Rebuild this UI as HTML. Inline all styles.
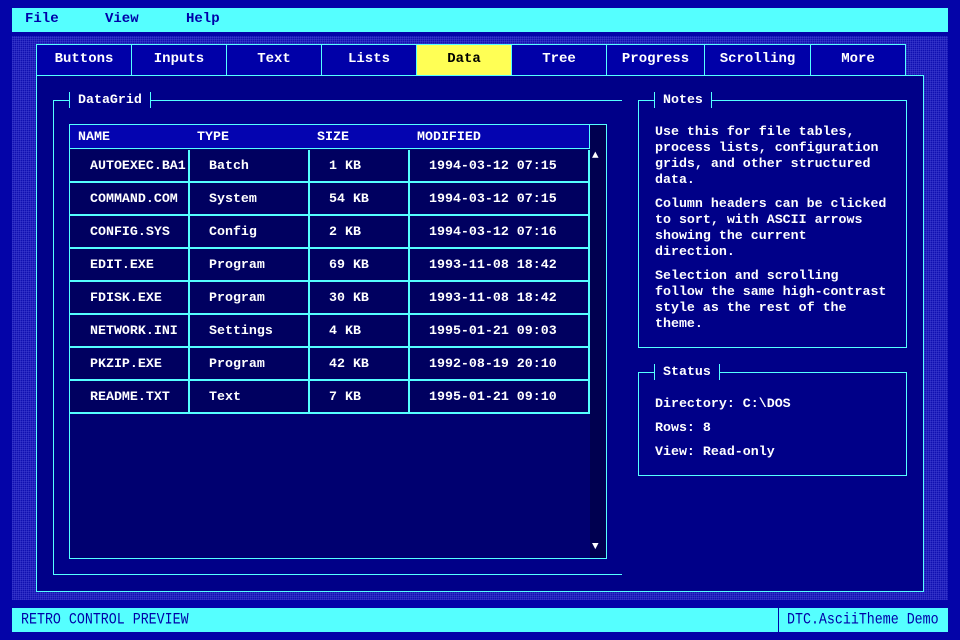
<!DOCTYPE html>
<html><head><style>
*{margin:0;padding:0;box-sizing:border-box}
body{width:960px;height:640px;background:#0404a8;font-family:"Liberation Mono",monospace;font-weight:bold;font-size:13.3px;color:#fff;position:relative;overflow:hidden}
.abs{position:absolute}
.menu{left:12px;top:8px;width:936px;height:24px;background:#55ffff;color:#0000a8;font-size:14px}
.menu span{position:absolute;top:3px}
.dither{left:12px;top:36px;width:936px;height:564px;background-color:#1010b0;background-image:repeating-linear-gradient(0deg,rgba(80,80,220,.35) 0 1px,transparent 1px 2px),repeating-linear-gradient(90deg,rgba(80,80,220,.35) 0 1px,transparent 1px 2px)}
.main{left:36px;top:75px;width:888px;height:517px;background:#000088;border:1px solid #55ffff}
.tab{top:44px;height:32px;background:#0000a8;border:1px solid #55ffff;text-align:center;line-height:28px;font-size:14px}
.tab.act{background:#ffff55;color:#000}
.ln{background:#55ffff}
.grid{left:69px;top:124px;width:538px;height:435px;background:#000070;border:1px solid #55ffff}
.hdr{left:70px;top:125px;width:520px;height:24px;background:#0404b0;border-bottom:1px solid #55ffff;border-right:1px solid #55ffff}
.row{left:70px;width:520px;height:33px;border-bottom:2px solid #55ffff;background:#000060}
.row span{position:absolute;top:8px}
.vc{position:absolute;top:0;bottom:0;width:2px;background:#55ffff}
.box{border:1px solid #55ffff}
.lbl{background:#000088;padding:0 8px;border-left:1px solid #55ffff;border-right:1px solid #55ffff;line-height:16px}
p{line-height:16px;margin-bottom:8px;width:236px}
.status{left:12px;top:608px;width:936px;height:24px;background:#55ffff;color:#0000a8;font-weight:normal;font-size:13.3px}
.status span{transform:scaleY(1.2);transform-origin:0 50%}
</style></head><body>
<div class="abs menu"><span style="left:13px">File</span><span style="left:93px">View</span><span style="left:174px">Help</span></div>
<div class="abs dither"></div>
<div class="abs main"></div>
<div class="abs tab" style="left:36px;width:96px">Buttons</div>
<div class="abs tab" style="left:131px;width:96px">Inputs</div>
<div class="abs tab" style="left:226px;width:96px">Text</div>
<div class="abs tab" style="left:321px;width:96px">Lists</div>
<div class="abs tab act" style="left:416px;width:96px">Data</div>
<div class="abs tab" style="left:511px;width:96px">Tree</div>
<div class="abs tab" style="left:606px;width:99px">Progress</div>
<div class="abs tab" style="left:704px;width:107px">Scrolling</div>
<div class="abs tab" style="left:810px;width:96px">More</div>

<div class="abs ln" style="left:53px;top:100px;width:569px;height:1px"></div>
<div class="abs ln" style="left:53px;top:100px;width:1px;height:475px"></div>
<div class="abs ln" style="left:53px;top:574px;width:569px;height:1px"></div>
<div class="abs lbl" style="left:69px;top:92px">DataGrid</div>

<div class="abs grid"></div>
<div class="abs" style="left:590px;top:125px;width:16px;height:433px;background:#000050"></div>
<div class="abs" style="left:592px;top:150px;font-size:11px">▲</div>
<div class="abs" style="left:592px;top:541px;font-size:11px">▼</div>
<div class="abs hdr"><span class="abs" style="left:8px;top:4px">NAME</span><span class="abs" style="left:127px;top:4px">TYPE</span><span class="abs" style="left:247px;top:4px">SIZE</span><span class="abs" style="left:347px;top:4px">MODIFIED</span></div>

<div class="abs row" style="top:150px"><span style="left:20px">AUTOEXEC.BA1</span><i class="vc" style="left:118px"></i><span style="left:139px">Batch</span><i class="vc" style="left:238px"></i><span style="left:259px">1 KB</span><i class="vc" style="left:338px"></i><span style="left:359px">1994-03-12 07:15</span><i class="vc" style="left:518px"></i></div>
<div class="abs row" style="top:183px"><span style="left:20px">COMMAND.COM</span><i class="vc" style="left:118px"></i><span style="left:139px">System</span><i class="vc" style="left:238px"></i><span style="left:259px">54 KB</span><i class="vc" style="left:338px"></i><span style="left:359px">1994-03-12 07:15</span><i class="vc" style="left:518px"></i></div>
<div class="abs row" style="top:216px"><span style="left:20px">CONFIG.SYS</span><i class="vc" style="left:118px"></i><span style="left:139px">Config</span><i class="vc" style="left:238px"></i><span style="left:259px">2 KB</span><i class="vc" style="left:338px"></i><span style="left:359px">1994-03-12 07:16</span><i class="vc" style="left:518px"></i></div>
<div class="abs row" style="top:249px"><span style="left:20px">EDIT.EXE</span><i class="vc" style="left:118px"></i><span style="left:139px">Program</span><i class="vc" style="left:238px"></i><span style="left:259px">69 KB</span><i class="vc" style="left:338px"></i><span style="left:359px">1993-11-08 18:42</span><i class="vc" style="left:518px"></i></div>
<div class="abs row" style="top:282px"><span style="left:20px">FDISK.EXE</span><i class="vc" style="left:118px"></i><span style="left:139px">Program</span><i class="vc" style="left:238px"></i><span style="left:259px">30 KB</span><i class="vc" style="left:338px"></i><span style="left:359px">1993-11-08 18:42</span><i class="vc" style="left:518px"></i></div>
<div class="abs row" style="top:315px"><span style="left:20px">NETWORK.INI</span><i class="vc" style="left:118px"></i><span style="left:139px">Settings</span><i class="vc" style="left:238px"></i><span style="left:259px">4 KB</span><i class="vc" style="left:338px"></i><span style="left:359px">1995-01-21 09:03</span><i class="vc" style="left:518px"></i></div>
<div class="abs row" style="top:348px"><span style="left:20px">PKZIP.EXE</span><i class="vc" style="left:118px"></i><span style="left:139px">Program</span><i class="vc" style="left:238px"></i><span style="left:259px">42 KB</span><i class="vc" style="left:338px"></i><span style="left:359px">1992-08-19 20:10</span><i class="vc" style="left:518px"></i></div>
<div class="abs row" style="top:381px"><span style="left:20px">README.TXT</span><i class="vc" style="left:118px"></i><span style="left:139px">Text</span><i class="vc" style="left:238px"></i><span style="left:259px">7 KB</span><i class="vc" style="left:338px"></i><span style="left:359px">1995-01-21 09:10</span><i class="vc" style="left:518px"></i></div>

<div class="abs box" style="left:638px;top:100px;width:269px;height:248px;padding:23px 0 0 16px">
<p>Use this for file tables, process lists, configuration grids, and other structured data.</p>
<p>Column headers can be clicked to sort, with ASCII arrows showing the current direction.</p>
<p>Selection and scrolling follow the same high-contrast style as the rest of the theme.</p>
</div>
<div class="abs lbl" style="left:654px;top:92px">Notes</div>

<div class="abs box" style="left:638px;top:372px;width:269px;height:104px;padding:23px 0 0 16px">
<p>Directory: C:\DOS</p>
<p>Rows: 8</p>
<p>View: Read-only</p>
</div>
<div class="abs lbl" style="left:654px;top:364px">Status</div>

<div class="abs status">
<span class="abs" style="left:9px;top:4px">RETRO CONTROL PREVIEW</span>
<div class="abs" style="left:766px;top:0;width:1px;height:24px;background:#0000a8"></div>
<span class="abs" style="left:775px;top:4px">DTC.AsciiTheme Demo</span>
</div>
</body></html>
